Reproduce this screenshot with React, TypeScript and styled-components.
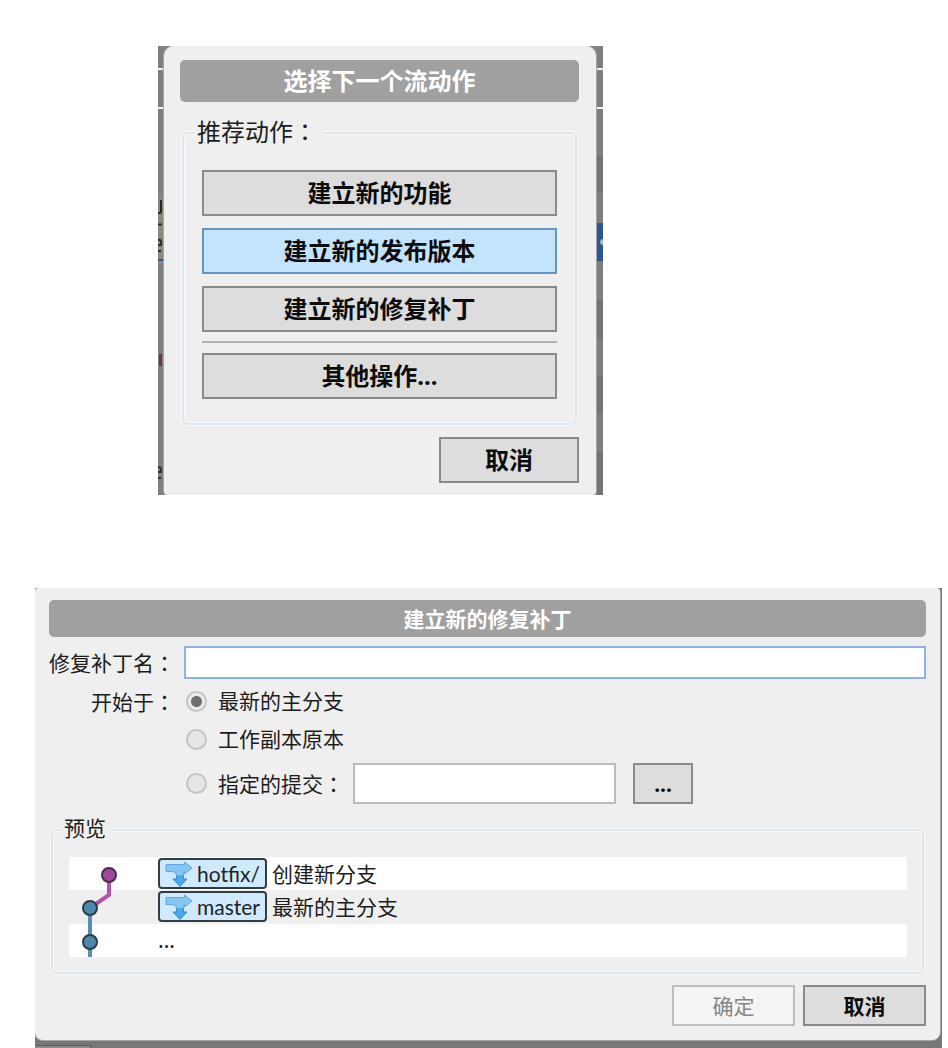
import React from "react";
import styled, { createGlobalStyle, css } from "styled-components";

const GlobalStyle = createGlobalStyle`
  *, *::before, *::after { box-sizing: border-box; }
  body {
    margin: 0;
    background: #fff;
    color: #1c1c1c;
    font-family: "Noto Sans", "Noto Sans CJK SC", sans-serif;
  }
  button, input { font: inherit; color: inherit; margin: 0; }
`;

const Page = styled.main`
  display: flex;
  flex-direction: column;
  gap: 93px;
  padding-top: 46px;
`;

const ActionStage = styled.section`
  position: relative;
  overflow: hidden;
  max-width: 445px;
  margin: 0 158px;
  padding: 0 7px 0 6px;
  background: #7f7f7f;
`;

const BranchStage = styled.section`
  position: relative;
  overflow: hidden;
  margin: 0 6px 0 35px;
  padding-bottom: 8px;
  background: #777;
`;

const Edge = styled.svg<{ $side: "left" | "right" }>`
  position: absolute;
  top: 0;
  ${(p) => p.$side}: 0;
`;

const Taskbar = styled.div`
  position: absolute;
  left: 0;
  bottom: 0;
  width: 56px;
  height: 3px;
  background: #8a8a8a;
  border-top: 1px solid #5c5c5c;
  border-right: 1px solid #5c5c5c;
`;

const ActionDialog = styled.div`
  position: relative;
  padding: 14px 17px 12px 16px;
  background: #efefef;
  border-radius: 10px 10px 4px 4px;
  box-shadow: 0 0 0 1px #a6a6a6;
  font-size: 24px;
  line-height: 32px;
`;

const BranchDialog = styled.form`
  position: relative;
  margin-right: 2px;
  padding: 12px 14px 14px;
  background: #efefef;
  border-radius: 4px 4px 8px 8px;
  box-shadow: 0 0 0 1px #a6a6a6;
  font-size: 21px;
  line-height: 28px;
`;

const Title = styled.h2<{ $tall?: boolean }>`
  display: flex;
  align-items: center;
  justify-content: center;
  height: ${(p) => (p.$tall ? 42 : 37)}px;
  margin: 0;
  background: #a0a0a0;
  border-radius: 5px;
  color: #fff;
  font-size: inherit;
  font-weight: 700;
`;

const Group = styled.fieldset`
  min-width: 0;
  margin: 0 2px;
  border: 2px solid #dfe6eb;
  border-radius: 6px;
  box-shadow: 0 0 0 1px #f7f9fa, inset 0 0 0 1px #f7f9fa;
`;

const ActionGroup = styled(Group)`
  margin-top: 13px;
  padding: 19px 18px 24px;
`;

const PreviewGroup = styled(Group)`
  margin-top: 10px;
  padding: 12px 15px 15px 16px;
`;

const Legend = styled.legend<{ $end: number }>`
  margin-left: -8px;
  padding: 0 ${(p) => p.$end}px 3px 3px;
  background: #efefef;
`;

const ColonGlyph = styled.span`
  font-family: "Noto Sans CJK JP", sans-serif;
`;

const Colon = () => <ColonGlyph lang="ja">：</ColonGlyph>;

const Stack = styled.div`
  display: flex;
  flex-direction: column;
  gap: 12px;
`;

const Rule = styled.hr`
  width: 100%;
  height: 2px;
  margin: 9px 0 10px;
  border: 0;
  background: #b2b2b2;
`;

const Button = styled.button<{ $active?: boolean; $width?: number; $height?: number }>`
  display: flex;
  align-items: center;
  justify-content: center;
  width: ${(p) => (p.$width ? `${p.$width}px` : "100%")};
  height: ${(p) => p.$height ?? 46}px;
  padding: 0;
  border: 2px solid #8b8b8b;
  background: #dddddd;
  color: #0c0c0c;
  font-weight: 700;
  ${(p) =>
    p.$active &&
    css`
      border-color: #6396c0;
      background: #c4e4fd;
    `}
  &:disabled {
    border-color: #bbbec2;
    background: #f4f4f4;
    color: #868686;
    font-weight: 400;
  }
`;

const Footer = styled.div<{ $top: number }>`
  display: flex;
  justify-content: flex-end;
  gap: 8px;
  margin-top: ${(p) => p.$top}px;
`;

const Form = styled.div`
  display: grid;
  grid-template-columns: 126px 1fr;
  column-gap: 9px;
  margin-top: 9px;
`;

const FieldLabel = styled.label`
  padding-top: 2px;
  text-align: right;
  white-space: nowrap;
`;

const TextInput = styled.input<{ $primary?: boolean }>`
  min-width: 0;
  width: ${(p) => (p.$primary ? "100%" : "263px")};
  height: ${(p) => (p.$primary ? 33 : 41)}px;
  padding: 0 6px;
  border: 2px solid ${(p) => (p.$primary ? "#8fb2e3" : "#b9bbc1")};
  background: #fff;
  outline: none;
`;

const StartLabel = styled.span`
  padding-top: 8px;
  text-align: right;
`;

const Options = styled.div`
  display: flex;
  flex-direction: column;
  gap: 10px;
  padding: 8px 0 0 2px;
`;

const Option = styled.div`
  display: flex;
  align-items: center;
`;

const OptionLabel = styled.label`
  display: flex;
  align-items: center;
  gap: 11px;
  white-space: nowrap;
`;

const Radio = styled.input`
  appearance: none;
  flex: none;
  width: 21px;
  height: 21px;
  border: 2px solid #c4c4c4;
  border-radius: 50%;
  background: #e6e6e6;
  &:checked {
    background: radial-gradient(circle, #707070 5px, #ececec 6px);
  }
`;

const CommitInput = styled(TextInput)`
  margin: 0 17px 0 9px;
`;

const Preview = styled.div`
  position: relative;
`;

const Rows = styled.ul`
  display: grid;
  grid-template-rows: repeat(3, 1fr);
  min-height: 100px;
  margin: 0;
  padding: 0;
  list-style: none;
`;

const Row = styled.li`
  display: flex;
  align-items: center;
  gap: 5px;
  padding-left: 89px;
  &:nth-child(odd) { background: #fff; }
`;

const Badge = styled.span`
  display: flex;
  align-items: center;
  gap: 4px;
  height: 31px;
  padding: 0 5px;
  border: 2px solid #333c43;
  border-radius: 4px;
  background: #cfeafe;
  color: #222;
  font-family: Lato, "Noto Sans CJK SC", sans-serif;
`;

const Graph = styled.svg`
  position: absolute;
  top: 0;
  left: 0;
`;

const BranchIcon = () => (
  <svg width="28" height="26" viewBox="0 0 28 26" aria-hidden="true">
    <path
      d="M11.500 10v8H8l7 7.500L22 18h-3.500v-8z"
      fill="#45a9ec"
      stroke="#348bcb"
      strokeWidth="1"
      strokeLinejoin="round"
    />
    <path
      d="M1 3.500h18.500V1L27 7l-7.500 6v-2.500c-1 .7-1 2-1 4h-7c0-2-2-4-4.500-4H1z"
      fill="#86c6f2"
      stroke="#62a8dc"
      strokeWidth="1"
      strokeLinejoin="round"
    />
  </svg>
);

const CommitGraph = () => (
  <Graph width="60" height="100" viewBox="0 0 60 100" aria-hidden="true">
    <path d="M40 18v20L21 51" fill="none" stroke="#b254b0" strokeWidth="4" />
    <path d="M21 51v49" fill="none" stroke="#5590b3" strokeWidth="4" />
    <circle cx="40" cy="18" r="7" fill="#a247a0" stroke="#43304a" strokeWidth="2" />
    <circle cx="21" cy="51" r="7" fill="#4f88ab" stroke="#263d4b" strokeWidth="2" />
    <circle cx="21" cy="85" r="7" fill="#4f88ab" stroke="#263d4b" strokeWidth="2" />
  </Graph>
);

const LeftEdge = () => (
  <Edge $side="left" width="5" height="449" viewBox="0 0 5 449" aria-hidden="true">
    <path d="M0 23h5M0 62h5" stroke="#f2f2f2" strokeWidth="2" />
    <rect y="148" width="5" height="70" fill="#8d877c" />
    <path d="M3 154v13M0 167h3M0 178.500h4M0 194q4-1 3 5H0M0 205h3" fill="none" stroke="#2a2926" strokeWidth="2" />
    <path d="M0 214h5" stroke="#245d95" strokeWidth="2" />
    <rect x="1" y="308" width="3" height="12" fill="#673c3c" />
    <path d="M0 421q4 0 3 5H0M0 432h3" fill="none" stroke="#303030" strokeWidth="2" />
  </Edge>
);

const RightEdge = () => (
  <Edge $side="right" width="6" height="449" viewBox="0 0 6 449" aria-hidden="true">
    <path d="M0 23h6M0 62h6" stroke="#f2f2f2" strokeWidth="2" />
    <path d="M0 110h6v36H0zM0 254h6v38H0zM0 330h6v38H0zM0 406h6v43H0z" fill="#747474" />
    <rect y="177" width="6" height="38" fill="#2d569a" />
    <circle cx="6" cy="196" r="3" fill="#a3b4b4" />
  </Edge>
);

const options = ["最新的主分支", "工作副本原本"];

export default function App() {
  return (
    <>
      <GlobalStyle />
      <Page lang="zh-CN">
        <ActionStage>
          <LeftEdge />
          <RightEdge />
          <ActionDialog>
            <Title $tall>选择下一个流动作</Title>
            <ActionGroup>
              <Legend $end={7}>
                推荐动作
                <Colon />
              </Legend>
              <Stack>
                <Button type="button">建立新的功能</Button>
                <Button type="button" $active>
                  建立新的发布版本
                </Button>
                <Button type="button">建立新的修复补丁</Button>
              </Stack>
              <Rule />
              <Button type="button">其他操作...</Button>
            </ActionGroup>
            <Footer $top={12}>
              <Button type="button" $width={140}>
                取消
              </Button>
            </Footer>
          </ActionDialog>
        </ActionStage>

        <BranchStage>
          <Taskbar />
          <BranchDialog onSubmit={(e) => e.preventDefault()}>
            <Title>建立新的修复补丁</Title>
            <Form>
              <FieldLabel htmlFor="name">
                修复补丁名
                <Colon />
              </FieldLabel>
              <TextInput id="name" type="text" $primary />
              <StartLabel id="start">
                开始于
                <Colon />
              </StartLabel>
              <Options role="radiogroup" aria-labelledby="start">
                {options.map((text, i) => (
                  <Option key={text}>
                    <OptionLabel>
                      <Radio type="radio" name="start" defaultChecked={i === 0} />
                      {text}
                    </OptionLabel>
                  </Option>
                ))}
                <Option>
                  <OptionLabel>
                    <Radio type="radio" name="start" />
                    <span>
                      指定的提交
                      <Colon />
                    </span>
                  </OptionLabel>
                  <CommitInput type="text" aria-label="指定的提交" />
                  <Button type="button" $width={60} $height={41}>
                    ...
                  </Button>
                </Option>
              </Options>
            </Form>
            <PreviewGroup>
              <Legend $end={6}>预览</Legend>
              <Preview>
                <Rows>
                  <Row>
                    <Badge>
                      <BranchIcon />
                      hotfix/
                    </Badge>
                    创建新分支
                  </Row>
                  <Row>
                    <Badge>
                      <BranchIcon />
                      master
                    </Badge>
                    最新的主分支
                  </Row>
                  <Row>...</Row>
                </Rows>
                <CommitGraph />
              </Preview>
            </PreviewGroup>
            <Footer $top={11}>
              <Button type="button" $width={123} $height={41} disabled>
                确定
              </Button>
              <Button type="button" $width={123} $height={41}>
                取消
              </Button>
            </Footer>
          </BranchDialog>
        </BranchStage>
      </Page>
    </>
  );
}
